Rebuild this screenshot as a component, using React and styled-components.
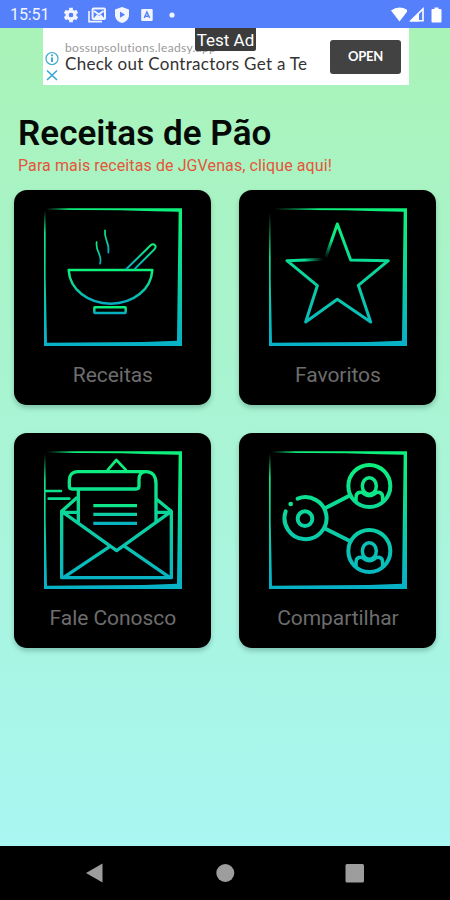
import React from 'react';
import styled, { createGlobalStyle } from 'styled-components';

const GlobalStyle = createGlobalStyle`
  * {
    box-sizing: border-box;
  }

  body {
    margin: 0;
    font-family: Roboto, 'Liberation Sans', sans-serif;
  }
`;

const Screen = styled.div`
  width: 450px;
  height: 900px;
  display: flex;
  flex-direction: column;
  overflow: hidden;
  background: linear-gradient(180deg, #a9f3b8 28px, #a9f6f2 846px);
`;

// Android status bar
const StatusBar = styled.header`
  height: 28px;
  flex: none;
  display: flex;
  align-items: center;
  padding: 1px 7px 0 10px;
  background: #5580fb;
  color: #f2f5ff;
`;

const Clock = styled.span`
  width: 53px;
  font-size: 16px;
  letter-spacing: -0.1px;
`;

const StatusIcons = styled.div`
  display: flex;
  align-items: center;
  gap: ${(props) => props.$gap}px;
  margin-left: ${(props) => (props.$end ? 'auto' : 0)};

  svg {
    display: block;
  }
`;

// Ad banner
const AdBanner = styled.section`
  position: relative;
  width: 366px;
  height: 57px;
  flex: none;
  margin-left: 43px;
  padding: 0 8px 0 2px;
  display: flex;
  align-items: center;
  background: #fff;
`;

const AdControls = styled.div`
  width: 20px;
  display: flex;
  flex-direction: column;
  gap: 3px;
  padding-top: 21px;
  align-self: flex-start;

  svg {
    display: block;
  }
`;

const AdCopy = styled.div`
  flex: 1;
  align-self: flex-start;
  padding-top: 13px;
  white-space: nowrap;
  font-family: Lato, 'Open Sans', sans-serif;
`;

const AdDomain = styled.div`
  font-size: 12px;
  line-height: 13px;
  letter-spacing: 0.33px;
  color: #999;
`;

const AdHeadline = styled.div`
  font-size: 17px;
  line-height: 19px;
  letter-spacing: 0.28px;
  color: #333;
`;

const AdButton = styled.button`
  width: 71px;
  height: 34px;
  border: none;
  border-radius: 3px;
  background: #424242;
  color: #fff;
  font-family: Lato, sans-serif;
  font-weight: 700;
  font-size: 13px;
  letter-spacing: -0.3px;
  padding: 0 0 2px;
`;

const TestLabel = styled.span`
  position: absolute;
  top: 0;
  left: 152px;
  width: 61px;
  height: 23px;
  border-radius: 0 0 2px 2px;
  background: #3c3c3c;
  color: #fff;
  font-size: 17px;
  line-height: 25px;
  text-align: center;
  white-space: nowrap;
`;

const Heading = styled.div`
  height: 105px;
  flex: none;
  padding: 28px 18px 0;
  white-space: nowrap;
`;

const Title = styled.h1`
  margin: 0;
  font-size: 35px;
  line-height: 42px;
  font-weight: 600;
  letter-spacing: 0.05px;
  color: #050a06;
`;

const MoreLink = styled.a`
  display: block;
  font-size: 16px;
  line-height: 22px;
  letter-spacing: 0.1px;
  color: #e5543b;
`;

const Grid = styled.main`
  flex: 1;
  display: grid;
  grid-template-columns: 197px 197px;
  grid-auto-rows: 215px;
  gap: 28px;
  padding-left: 14.4px;
`;

const Card = styled.div`
  display: flex;
  flex-direction: column;
  align-items: center;
  padding-top: 17.5px;
  border-radius: 13px;
  background: #000;
  box-shadow: 0 3px 5px rgba(0, 50, 40, 0.25);
`;

const CardArt = styled.svg`
  display: block;
  width: 138px;
  height: 138px;
`;

const CardLabel = styled.span`
  margin-top: 17px;
  font-size: 21px;
  line-height: 25px;
  letter-spacing: -0.05px;
  color: #6d6d6d;
`;

// Android navigation bar
const NavBar = styled.nav`
  height: 54px;
  flex: none;
  display: flex;
  justify-content: space-between;
  align-items: center;
  padding: 0 85px;
  background: #000;
`;

const Frame = ({ id, fade, children }) => (
  <CardArt viewBox="0 0 414 414" fill="none">
    <defs>
      <linearGradient id={`${id}-line`} gradientUnits="userSpaceOnUse" x1="0" y1="0" x2="0" y2="414">
        <stop offset="0.1" stopColor="#0df07c" />
        <stop offset="0.95" stopColor="#08b2c6" />
      </linearGradient>
      <radialGradient id={`${id}-fade`} gradientUnits="userSpaceOnUse" cx="0" cy="0" r={fade}>
        <stop offset="0.1" stopColor="#000" />
        <stop offset="1" stopColor="#000" stopOpacity="0" />
      </radialGradient>
    </defs>
    <path
      fill={`url(#${id}-line)`}
      fillRule="evenodd"
      d="M0 1H414V414H0ZM5 5V210L9 404L300 402L399 398L404 11L330 10L230 7Z"
    />
    <circle r={fade} fill={`url(#${id}-fade)`} />
    {children}
  </CardArt>
);

const BowlArt = () => (
  <Frame id="bowl" fade={75}>
    <defs>
      <linearGradient id="bowl-own" x1="0" y1="0" x2="0" y2="1">
        <stop offset="0.05" stopColor="#0df07c" />
        <stop offset="1" stopColor="#08acc2" />
      </linearGradient>
    </defs>
    <g stroke="url(#bowl-own)" strokeWidth="7.5" strokeLinejoin="round" strokeLinecap="round">
      <path d="M74 186H325C322 244 268 287 200 287S77 244 74 186Z" />
      <rect x="151" y="298" width="94" height="17" rx="2" />
      <path strokeWidth="6" d="M248 182L320 112C330 103 340 115 331 124L273 182" />
      <path strokeWidth="5" d="M158 102C153 132 177 140 168 167" />
      <path strokeWidth="5" d="M183 67C179 96 198 102 193 134" />
    </g>
  </Frame>
);

const StarArt = () => (
  <Frame id="star" fade={150}>
    <defs>
      <radialGradient id="star-notch" gradientUnits="userSpaceOnUse" cx="166" cy="153" r="60">
        <stop offset="0.08" stopColor="#000" />
        <stop offset="1" stopColor="#000" stopOpacity="0" />
      </radialGradient>
    </defs>
    <path
      stroke="url(#star-line)"
      strokeWidth="9"
      strokeLinejoin="round"
      d="M205 48L245 156L358 158L268 232L305 342L205 274L110 342L145 233L54 158L168 154Z"
    />
    <circle cx="166" cy="153" r="60" fill="url(#star-notch)" />
  </Frame>
);

const EnvelopeArt = () => (
  <Frame id="mail" fade={90}>
    <defs>
      <linearGradient id="mail-text" gradientUnits="userSpaceOnUse" x1="0" y1="159" x2="0" y2="222">
        <stop stopColor="#0fe985" />
        <stop offset="1" stopColor="#0aafc5" />
      </linearGradient>
    </defs>
    <g stroke="url(#mail-line)" strokeWidth="10" strokeLinejoin="round">
      <path d="M53 181V380H382V181L218 299Z" />
      <path d="M58 380L198 286M378 380L242 286" />
      <path d="M53 181L100 139M53 184H103M382 181L336 143M382 184H336" />
      <path d="M103 114V213M336 213V98C336 75 325 62 306 62H102C84 62 76 73 76 88V106Q76 114 84 114H276Q285 114 285 105V86C285 72 292 62 306 62" />
      <path strokeWidth="8" d="M190 58L217 27L247 58" />
      <path strokeWidth="8" strokeLinecap="round" d="M6 120H51M14 143H76" />
    </g>
    <path stroke="url(#mail-text)" strokeWidth="10" d="M148 164H279M148 190H279M148 217H279" />
  </Frame>
);

const personPath = 'M-40 45V36C-41 17 -24 15 -15 24Q0 34 15 24C24 15 41 17 40 36V45';

const ShareArt = () => (
  <Frame id="share" fade={80}>
    <g stroke="url(#share-line)" strokeWidth="12" strokeLinecap="round">
      <path d="M86 143A63 63 0 1 1 50 181" />
      <circle cx="108" cy="203" r="22" />
      <path d="M171 170L241 134M171 234L241 269" />
      <circle cx="301" cy="105" r="63" />
      <circle cx="301" cy="300" r="63" />
    </g>
    <circle cx="65" cy="159" r="7" fill="#0fe68e" />
    {[{ y: 105, color: '#0de786' }, { y: 300, color: '#0bc0b8' }].map(({ y, color }) => (
      <g key={y} transform={`translate(301 ${y})`} stroke={color} strokeWidth="10.5">
        <ellipse rx="21" ry="25" />
        <path d={personPath} />
      </g>
    ))}
  </Frame>
);

const menuItems = [
  { label: 'Receitas', Art: BowlArt },
  { label: 'Favoritos', Art: StarArt },
  { label: 'Fale Conosco', Art: EnvelopeArt },
  { label: 'Compartilhar', Art: ShareArt },
];

const App = () => (
  <>
    <GlobalStyle />
    <Screen>
      <StatusBar>
        <Clock>15:51</Clock>
        <StatusIcons $gap={9}>
          <svg width="16" height="16" viewBox="0 0 16 16">
            <circle cx="8" cy="8" r="3.8" fill="none" stroke="#f2f5ff" strokeWidth="3.4" />
            <path stroke="#f2f5ff" strokeWidth="3.8" d="M8 .8V3.5M8 12.5V15.2M1.8 4.4L4 5.7M12 10.3L14.2 11.6M1.8 11.6L4 10.3M12 5.7L14.2 4.4" />
            <circle cx="8" cy="8" r="2.3" fill="#5580fb" />
          </svg>
          <svg width="18" height="16" viewBox="0 0 18 16" fill="none" stroke="#f2f5ff">
            <path strokeWidth="1.6" d="M1 4V14.6H14" />
            <rect x="4.6" y="1.6" width="12.4" height="10.4" rx="1" strokeWidth="2" />
            <path strokeWidth="1.8" d="M6 4L10.8 7.3L15.6 4" />
            <path fill="#f2f5ff" stroke="none" d="M5 12L9 7.5L11 9L13 7.5L17 12Z" />
          </svg>
          <svg width="16" height="16" viewBox="0 0 16 16">
            <path fill="#f2f5ff" d="M7 0L14 2.6V8C14 12 11 15 7 16C3 15 0 12 0 8V2.6Z" />
            <path fill="#5580fb" d="M5 4.6L10 7.7L5 10.8Z" />
          </svg>
          <svg width="16" height="16" viewBox="0 0 16 16">
            <rect x="1.2" y="2" width="11.5" height="12" rx="1" fill="#f2f5ff" />
            <path fill="none" stroke="#5580fb" strokeWidth="1.4" d="M4.2 11L6.9 5L9.7 11M5.2 9.2H8.7" />
          </svg>
          <svg width="16" height="16" viewBox="0 0 16 16">
            <circle cx="7" cy="8" r="2.6" fill="#f2f5ff" />
          </svg>
        </StatusIcons>
        <StatusIcons $gap={2} $end>
          <svg width="17" height="15" viewBox="0 0 17 15">
            <path fill="#fff" d="M1 3.5Q9.5 -2.5 18 3.5L9.5 14.5Z" />
          </svg>
          <svg width="16" height="15" viewBox="0 0 16 15">
            <path fill="none" stroke="#fff" strokeWidth="1.6" d="M2 13.7H14V2Z" />
            <path fill="#fff" d="M1 14.5L10 5.5V14.5Z" />
          </svg>
          <svg width="16" height="16" viewBox="0 0 16 16">
            <path fill="#fff" d="M5.5 2H7.5V.5H11.5V2H13.5Q14.5 2 14.5 3V14.5Q14.5 15.5 13.5 15.5H5.5Q4.5 15.5 4.5 14.5V3Q4.5 2 5.5 2Z" />
          </svg>
        </StatusIcons>
      </StatusBar>

      <AdBanner>
        <AdControls>
          <svg width="14" height="16" viewBox="0 0 14 16" fill="none" stroke="#3ca9d0">
            <circle cx="7" cy="9.5" r="6" strokeWidth="1.2" />
            <path strokeWidth="2" d="M7 5.5V7.2M7 8.5V13" />
          </svg>
          <svg width="14" height="14" viewBox="0 0 14 14" fill="none" stroke="#3ca9d0">
            <path strokeWidth="1.7" d="M2 2.5L12 12M12 2.5L2 12" />
          </svg>
        </AdControls>
        <AdCopy>
          <AdDomain>bossupsolutions.leadsy.app</AdDomain>
          <AdHeadline>Check out Contractors Get a Te</AdHeadline>
        </AdCopy>
        <AdButton>OPEN</AdButton>
        <TestLabel>Test Ad</TestLabel>
      </AdBanner>

      <Heading>
        <Title>Receitas de Pão</Title>
        <MoreLink>Para mais receitas de JGVenas, clique aqui!</MoreLink>
      </Heading>

      <Grid>
        {menuItems.map(({ label, Art }) => (
          <Card key={label}>
            <Art />
            <CardLabel>{label}</CardLabel>
          </Card>
        ))}
      </Grid>

      <NavBar>
        <svg width="20" height="20" viewBox="0 0 20 20">
          <path fill="#9d9d9d" d="M1 10L17.5 .5V19.5Z" />
        </svg>
        <svg width="20" height="20" viewBox="0 0 20 20">
          <circle cx="10.3" cy="10" r="9" fill="#9d9d9d" />
        </svg>
        <svg width="20" height="20" viewBox="0 0 20 20">
          <rect x=".5" y="1" width="18.5" height="18.5" rx="1.5" fill="#9d9d9d" />
        </svg>
      </NavBar>
    </Screen>
  </>
);

export default App;
